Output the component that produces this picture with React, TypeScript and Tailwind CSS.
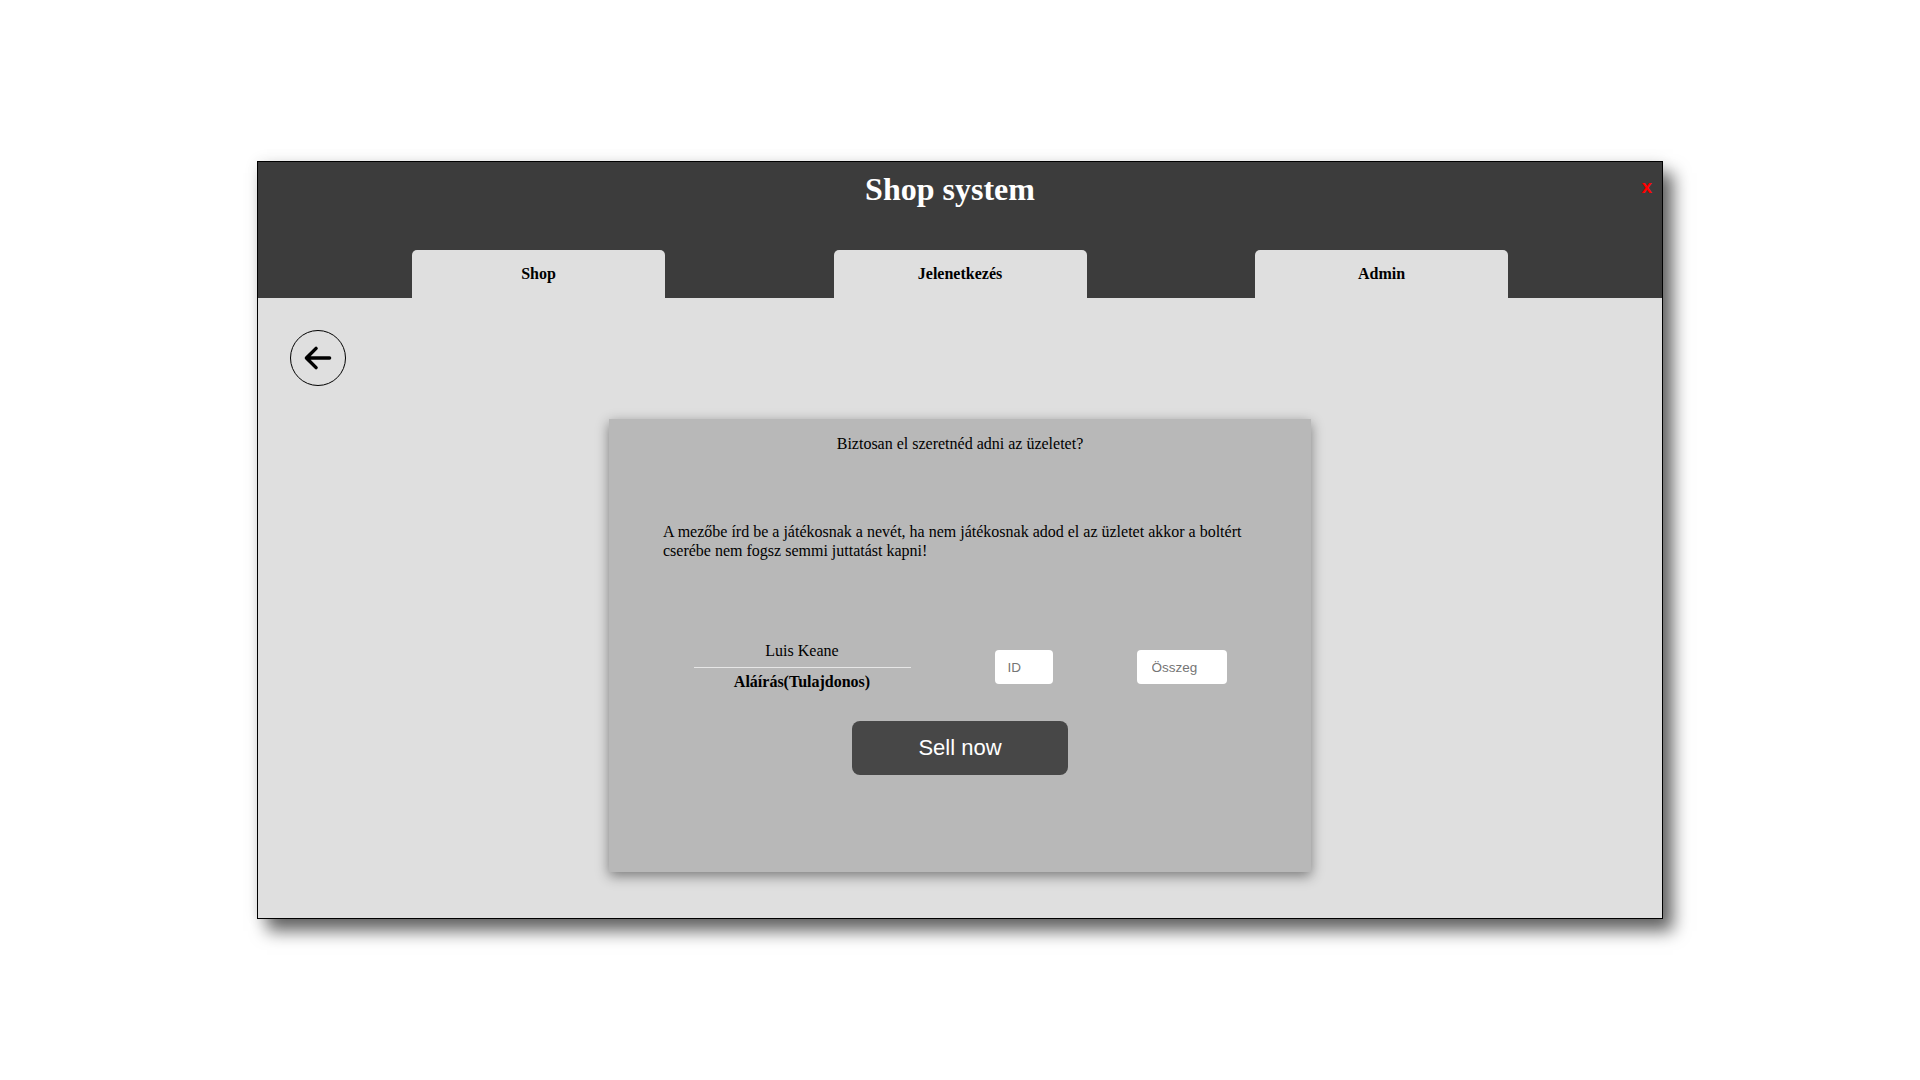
import React from "react";

const serif = "font-['Liberation_Serif','Times_New_Roman',serif]";
const sans = "font-['Liberation_Sans',Arial,sans-serif]";

function BackArrow() {
  return (
    <svg width="56" height="56" viewBox="0 0 56 56" className="block">
      <path
        d="M16 28 L40 28 M26 18 L16 28 L26 38"
        fill="none"
        stroke="#000"
        strokeWidth="3.6"
        strokeLinecap="round"
        strokeLinejoin="round"
      />
    </svg>
  );
}

export default function App() {
  const tabs = ["Shop", "Jelenetkezés", "Admin"];
  return (
    <div className={`w-full h-screen bg-white flex items-center justify-center ${serif}`}>
      <div className="relative w-[1406px] h-[758px] border border-black bg-[#dfdfdf] flex flex-col shadow-[10px_12px_16px_rgba(0,0,0,0.6),0_0_14px_rgba(0,0,0,0.08)]">
        {/* Header */}
        <div className="h-[136px] bg-[#3c3c3c] flex flex-col">
          <h1 className="pt-[9px] pr-[20px] text-center text-white font-bold text-[32px] leading-[36px]">
            Shop system
          </h1>
          <div className="mt-auto flex justify-between px-[154px]">
            {tabs.map((t) => (
              <div
                key={t}
                className="w-[253px] h-[48px] bg-[#dfdfdf] rounded-t-[5px] pt-[15px] text-center text-black font-bold text-[16px] leading-[18px]"
              >
                {t}
              </div>
            ))}
          </div>
        </div>
        <span className={`absolute top-[15px] right-[10px] text-[#ff0000] font-bold text-[19px] leading-[20px] ${sans}`}>
          x
        </span>

        {/* Content */}
        <div className="flex-1 flex flex-col pt-[32px]">
          <button className="ml-[32px] w-[56px] h-[56px] rounded-full border border-black flex items-center justify-center p-0 bg-transparent">
            <BackArrow />
          </button>

          <div className="mx-auto mt-[33px] w-[702px] h-[453px] bg-[#b8b8b8] shadow-[0_4px_12px_rgba(0,0,0,0.45)] flex flex-col px-[54px] pt-[16px] text-black">
            <p className="text-center text-[16px] leading-[18px]">
              Biztosan el szeretnéd adni az üzeletet?
            </p>
            <p className="mt-[70px] text-[16px] leading-[18.5px]">
              A mezőbe írd be a játékosnak a nevét, ha nem játékosnak adod el az üzletet akkor a boltért cserébe nem fogsz semmi juttatást kapni!
            </p>

            <div className="mt-[82px] flex items-start justify-center gap-[84px]">
              <div className="w-[217px] flex flex-col items-center">
                <div className="text-[16px] leading-[18px]">Luis Keane</div>
                <div className="mt-[7px] w-full h-px bg-[#e6e6e6]" />
                <div className="mt-[5px] font-bold text-[16px] leading-[18px]">Aláírás(Tulajdonos)</div>
              </div>
              <input
                placeholder="ID"
                className={`mt-[8px] w-[58px] h-[34px] bg-white rounded-[4px] pl-[13px] text-[13.5px] outline-none placeholder:text-[#757575] ${sans}`}
              />
              <input
                placeholder="Összeg"
                className={`mt-[8px] w-[90px] h-[34px] bg-white rounded-[4px] pl-[15px] text-[13.5px] outline-none placeholder:text-[#757575] ${sans}`}
              />
            </div>

            <button
              className={`mx-auto mt-[30px] w-[216px] h-[54px] rounded-[8px] bg-[#474747] text-white text-[22px] leading-[26px] flex items-center justify-center ${sans}`}
            >
              Sell now
            </button>
          </div>
        </div>
      </div>
    </div>
  );
}
